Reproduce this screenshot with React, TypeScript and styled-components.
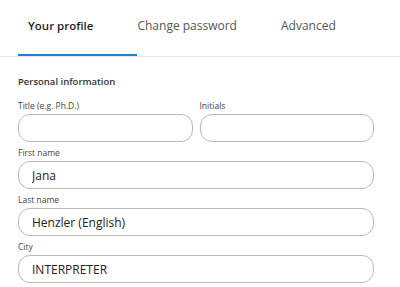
import styled, { createGlobalStyle } from "styled-components";

const GlobalStyle = createGlobalStyle`
  html, body {
    margin: 0;
    padding: 0;
    background: #ffffff;
    font-family: "Open Sans", "Noto Sans", sans-serif;
  }
`;

const tabs = [
  { label: "Your profile", active: true },
  { label: "Change password", active: false },
  { label: "Advanced", active: false },
];

type Field = { label: string; value: string };

const fields: Field[] = [
  { label: "First name", value: "Jana" },
  { label: "Last name", value: "Henzler (English)" },
  { label: "City", value: "INTERPRETER" },
];

function App() {
  return (
    <Page>
      <GlobalStyle />
      <TabBar>
        {tabs.map((t) => (
          <Tab key={t.label} $active={t.active}>
            {t.label}
          </Tab>
        ))}
      </TabBar>

      <Content>
        <SectionTitle>Personal information</SectionTitle>

        <Row>
          <FieldBox>
            <Label>Title (e.g. Ph.D.)</Label>
            <Input readOnly value="" />
          </FieldBox>
          <FieldBox>
            <Label>Initials</Label>
            <Input readOnly value="" />
          </FieldBox>
        </Row>

        {fields.map((f) => (
          <FieldBox key={f.label}>
            <Label>{f.label}</Label>
            <Input readOnly value={f.value} />
          </FieldBox>
        ))}
      </Content>
    </Page>
  );
}

export default App;

const Page = styled.div`
  width: 400px;
  height: 287px;
  overflow: hidden;
  background: #fff;
`;

const TabBar = styled.div`
  display: flex;
  align-items: center;
  gap: 44px;
  height: 56px;
  padding-left: 28px;
  border-bottom: 1px solid #ececec;
  box-sizing: content-box;
`;

const Tab = styled.div<{ $active: boolean }>`
  position: relative;
  height: 56px;
  display: flex;
  align-items: center;
  padding-bottom: 6px;
  box-sizing: border-box;
  font-size: ${(p) => (p.$active ? "11.5px" : "12px")};
  font-weight: ${(p) => (p.$active ? 600 : 400)};
  color: ${(p) => (p.$active ? "#1f1f1f" : "#555")};
  white-space: nowrap;

  &::after {
    content: "";
    display: ${(p) => (p.$active ? "block" : "none")};
    position: absolute;
    left: -10px;
    right: -44px;
    bottom: 0;
    height: 2px;
    background: #2180d3;
  }
`;

const Content = styled.div`
  width: 356px;
  padding: 18px 0 0 18px;
  display: flex;
  flex-direction: column;
  gap: 5px;
`;

const SectionTitle = styled.div`
  font-size: 9.5px;
  font-weight: 600;
  color: #333;
  line-height: 14px;
  margin-bottom: 6px;
`;

const Row = styled.div`
  display: flex;
  gap: 7px;
`;

const FieldBox = styled.div`
  flex: 1;
  display: flex;
  flex-direction: column;
  gap: 2px;
`;

const Label = styled.div`
  font-size: 8.5px;
  color: #444;
  line-height: 12px;
`;

const Input = styled.input`
  box-sizing: border-box;
  width: 100%;
  height: 28px;
  border: 1px solid #b9b9b9;
  border-radius: 12px;
  padding: 0 13px;
  font-family: "Open Sans", "Noto Sans", sans-serif;
  font-size: 12px;
  color: #222;
  background: #fff;
  outline: none;
`;
